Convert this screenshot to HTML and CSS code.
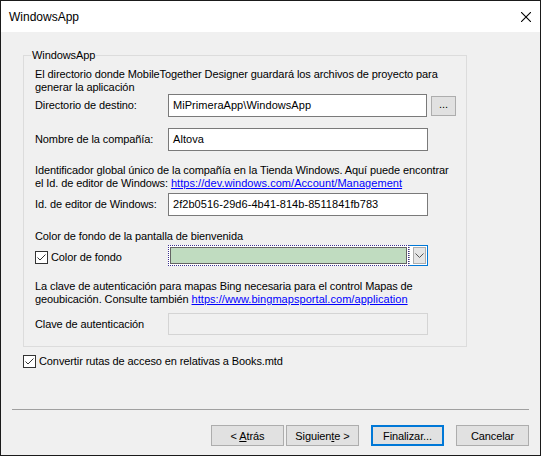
FILE: index.html
```html
<!DOCTYPE html>
<html lang="es">
<head>
<meta charset="utf-8">
<title>WindowsApp</title>
<link rel="stylesheet" href="styles.css">
</head>
<body>
<div class="window">
  <div class="titlebar">
    <span class="title">WindowsApp</span>
    <svg class="close" width="10" height="10" viewBox="0 0 10 10"><path d="M0 0 L10 10 M10 0 L0 10" stroke="#000" stroke-width="1.1" fill="none"/></svg>
  </div>
  <div class="client">
    <div class="group">
      <div class="legend">WindowsApp</div>
      <p class="para p1">El directorio donde MobileTogether Designer guardará los archivos de proyecto para<br>generar la aplicación</p>
      <div class="row r1">
        <span class="lbl">Directorio de destino:</span>
        <div class="input">MiPrimeraApp\WindowsApp</div>
        <button class="browse">...</button>
      </div>
      <div class="row r2">
        <span class="lbl">Nombre de la compañía:</span>
        <div class="input">Altova</div>
      </div>
      <p class="para p2">Identificador global único de la compañía en la Tienda Windows. Aquí puede encontrar<br>el Id. de editor de Windows: <a class="link" href="#">https://dev.windows.com/Account/Management</a></p>
      <div class="row r3">
        <span class="lbl">Id. de editor de Windows:</span>
        <div class="input">2f2b0516-29d6-4b41-814b-8511841fb783</div>
      </div>
      <p class="para p3">Color de fondo de la pantalla de bienvenida</p>
      <div class="row r4">
        <span class="lbl chk-lbl">
          <svg class="chk" width="13" height="13" viewBox="0 0 13 13"><rect x="0.5" y="0.5" width="12" height="12" fill="#fff" stroke="#333"/><path d="M2.5 6.5 L5 9 L10.5 3.5" fill="none" stroke="#333" stroke-width="1"/></svg>
          <span>Color de fondo</span>
        </span>
        <div class="combo">
          <div class="field"><div class="swatch"></div></div>
          <div class="drop"><div class="dropbtn"><svg width="9" height="5" viewBox="0 0 9 5"><path d="M0.5 0.5 L4.5 4.5 L8.5 0.5" stroke="#555" fill="none"/></svg></div></div>
        </div>
      </div>
      <p class="para p4">La clave de autenticación para mapas Bing necesaria para el control Mapas de<br>geoubicación. Consulte también <a class="link" href="#">https://www.bingmapsportal.com/application</a></p>
      <div class="row r5">
        <span class="lbl">Clave de autenticación</span>
        <div class="input disabled"></div>
      </div>
    </div>
    <div class="convert">
      <svg class="chk" width="13" height="13" viewBox="0 0 13 13"><rect x="0.5" y="0.5" width="12" height="12" fill="#fff" stroke="#333"/><path d="M2.5 6.5 L5 9 L10.5 3.5" fill="none" stroke="#333" stroke-width="1"/></svg>
      <span>Convertir rutas de acceso en relativas a Books.mtd</span>
    </div>
    <div class="sep"></div>
    <div class="buttons">
      <button class="btn back">&lt; <u>A</u>trás</button>
      <button class="btn next">Siguien<u>t</u>e &gt;</button>
      <button class="btn finish">Finalizar...</button>
      <button class="btn cancel">Cancelar</button>
    </div>
  </div>
</div>
</body>
</html>
```
FILE: styles.css
```css
* { box-sizing: border-box; }
body {
  margin: 0;
  font-family: "Liberation Sans", Arial, sans-serif;
  font-size: 11px;
  letter-spacing: -0.1px;
  color: #000;
}
.window {
  width: 541px;
  height: 456px;
  border: 1px solid #1a1a1a;
  background: #f0f0f0;
  display: flex;
  flex-direction: column;
}
.titlebar {
  height: 31px;
  flex: none;
  background: #fff;
  display: flex;
  align-items: center;
  justify-content: space-between;
  padding: 0 9px 0 8px;
}
.title {
  font-size: 12px;
  letter-spacing: 0;
  line-height: 14px;
}
.close { display: block; }
.client {
  flex: 1;
  display: flex;
  flex-direction: column;
}
.group {
  margin: 23px 0 0 22px;
  width: 444px;
  border: 1px solid #dcdcdc;
  padding: 0 10px 11px 11px;
}
.legend {
  display: table;
  margin: -8px 0 0 -4px;
  padding: 0 1px;
  background: #f0f0f0;
  line-height: 14px;
}
.para {
  margin: 0;
  line-height: 13px;
  white-space: nowrap;
}
.p1 { margin-top: 6px; }
.p2 { margin-top: 13px; }
.p3 { margin-top: 14px; }
.p4 { margin-top: 14px; }
.link { color: #0000ff; text-decoration: underline; letter-spacing: 0.05px; }
.row {
  display: flex;
  align-items: center;
}
.r2 { margin-top: 11px; }
.r3 { margin-top: 3px; }
.r4 { margin-top: 2px; align-items: flex-start; }
.r5 { margin-top: 7px; }
.lbl {
  width: 133px;
  flex: none;
  line-height: 13px;
  white-space: nowrap;
}
.input {
  width: 260px;
  height: 23px;
  background: #fff;
  border: 1px solid #7a7a7a;
  display: flex;
  align-items: center;
  padding: 0 0 1px 4px;
  white-space: nowrap;
  letter-spacing: 0.05px;
}
.input.disabled {
  height: 22px;
  background: #f0f0f0;
  border-color: #d4d4d4;
}
.browse {
  margin-left: 4px;
  width: 25px;
  height: 20px;
  background: #e1e1e1;
  border: 1px solid #adadad;
  font-family: inherit;
  font-size: 11px;
  padding: 0 0 3px 0;
  color: #000;
}
.chk-lbl {
  display: flex;
  align-items: center;
  gap: 3px;
  margin-top: 6px;
}
.chk { display: block; flex: none; }
.combo {
  width: 260px;
  height: 21px;
  display: flex;
}
.field {
  flex: 1;
  border: 1px dotted #3b2f8f;
  padding: 1px;
  background: #fff;
}
.swatch {
  height: 100%;
  border: 1px solid #646464;
  background: #c0dcc0;
}
.drop {
  width: 19px;
  border: 1px solid #0078d7;
  border-left: 1px dotted #8a8a8a;
  padding: 1px 1px 1px 3px;
  background: #fff;
}
.dropbtn {
  height: 100%;
  background: #e5e5e5;
  border: 1px solid #adadad;
  display: flex;
  align-items: center;
  justify-content: center;
}
.convert {
  margin: 8px 0 0 22px;
  display: flex;
  align-items: center;
  gap: 3px;
  line-height: 13px;
}
.sep {
  margin: 41px 11px 0 11px;
  height: 1px;
  background: #a0a0a0;
}
.buttons {
  margin-top: 15px;
  display: flex;
  justify-content: flex-end;
  padding-right: 11px;
}
.btn {
  width: 73px;
  height: 21px;
  background: #e1e1e1;
  border: 1px solid #adadad;
  font-family: inherit;
  font-size: 11px;
  letter-spacing: -0.1px;
  color: #000;
  padding: 0;
}
.next { margin-left: 2px; }
.finish {
  margin-left: 12px;
  border: 2px solid #0078d7;
}
.cancel { margin-left: 12px; }
u { text-decoration: underline; }
```
